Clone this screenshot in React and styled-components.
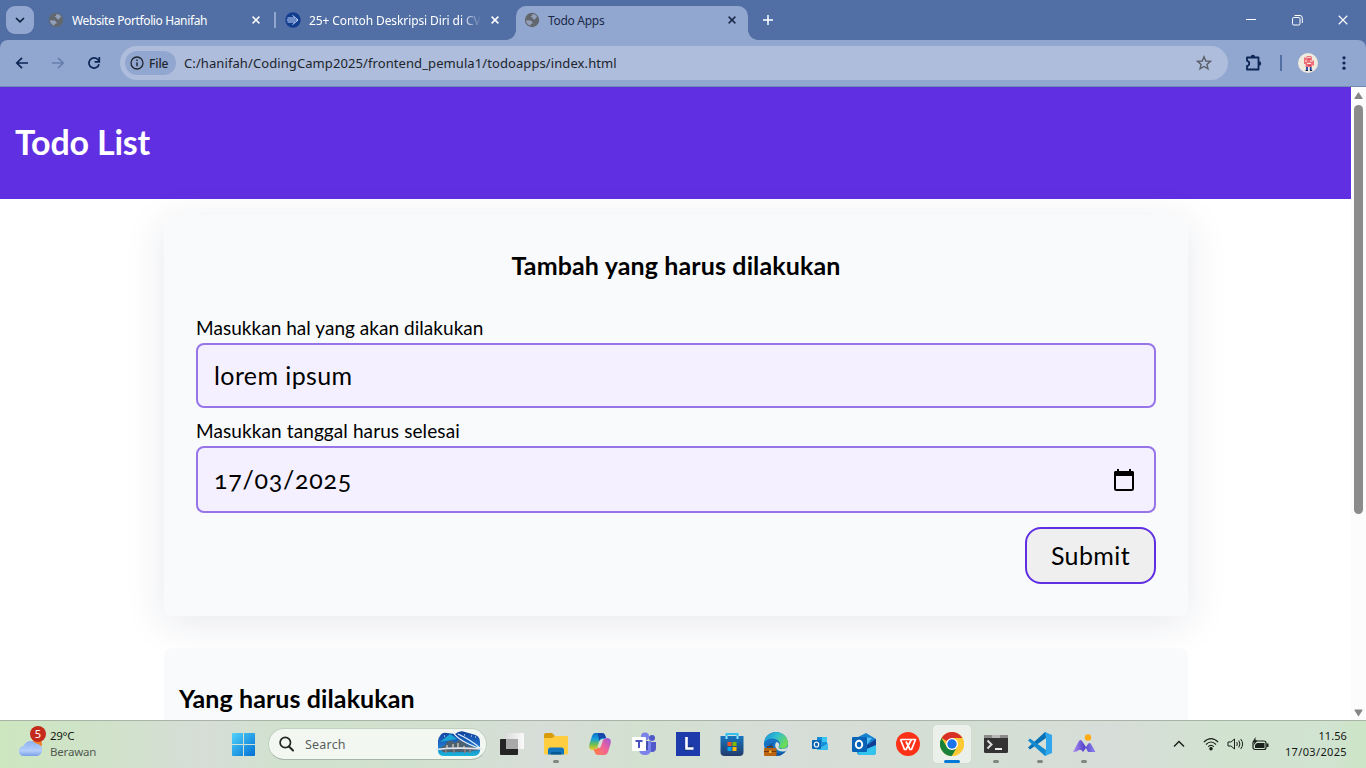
import React from "react";
import styled, { createGlobalStyle, css } from "styled-components";

const GlobalStyle = createGlobalStyle`
  * { box-sizing: border-box; }
  html, body { margin: 0; height: 100%; overflow: hidden; }
  svg { display: block; flex: none; }
`;

const uiFont = css`font-family: "Noto Sans", "Open Sans", sans-serif;`;
const pageFont = css`font-family: Lato, "Open Sans", sans-serif;`;

const Screen = styled.div`
  width: 1366px;
  height: 768px;
  display: flex;
  flex-direction: column;
  overflow: hidden;
  background: #fff;
  ${uiFont}
`;

/* ---------- browser chrome ---------- */
const TabStrip = styled.div`
  height: 40px;
  flex: none;
  display: flex;
  align-items: flex-start;
  background: #516fa5;
  padding: 6px 0 0 6px;
`;
const TabSearch = styled.button`
  width: 28px;
  height: 28px;
  border: 0;
  padding: 0;
  border-radius: 9px;
  background: #92a7d0;
  display: grid;
  place-items: center;
  margin-right: 6px;
`;
const Tab = styled.div`
  position: relative;
  width: ${(p) => p.$width}px;
  height: 34px;
  display: flex;
  align-items: center;
  padding: 0 ${(p) => p.$end}px 6px 8px;
  color: ${(p) => (p.$active ? "#1c2a4a" : "#fff")};
  ${(p) =>
    p.$active &&
    css`
      background: #92a7d0;
      border-radius: 10px 10px 0 0;
      &::before, &::after {
        content: "";
        position: absolute;
        bottom: 0;
        width: 10px;
        height: 10px;
      }
      &::before { left: -10px; background: radial-gradient(circle at 0 0, transparent 9.5px, #92a7d0 10.2px); }
      &::after { right: -10px; background: radial-gradient(circle at 100% 0, transparent 9.5px, #92a7d0 10.2px); }
    `}
`;
const TabTitle = styled.span`
  flex: 1;
  padding-top: 2px;
  margin-left: 8px;
  margin-right: 10px;
  font-size: 12px;
  line-height: 16px;
  letter-spacing: ${(p) => p.$track || 0}px;
  white-space: nowrap;
  ${(p) => p.$fade && css`mask-image: linear-gradient(90deg, #000 calc(100% - 20px), transparent calc(100% + 1px));`}
`;
const TabDivider = styled.i`
  width: 2px;
  height: 16px;
  margin: 6px 1px 0;
  background: #92a7d0;
`;
const NewTab = styled.span`
  display: grid;
  place-items: center;
  width: 28px;
  height: 28px;
  margin-left: 6px;
`;
const WindowButtons = styled.div`
  display: flex;
  margin-left: auto;
`;
const WindowButton = styled.span`
  width: 46px;
  height: 28px;
  display: grid;
  place-items: center;
`;
const ToolbarBack = styled.div`
  background: #516fa5;
  height: 47px;
  flex: none;
`;
const Toolbar = styled.div`
  height: 47px;
  display: flex;
  align-items: center;
  background: #92a7d0;
  border-radius: 8px 8px 0 0;
  border-bottom: 1px solid #728bb3;
  padding: 0 4px;
`;
const ToolButton = styled.span`
  width: ${(p) => p.$w || 36}px;
  flex: none;
  height: 34px;
  display: grid;
  place-items: center;
`;
const Omnibox = styled.div`
  width: 1108px;
  flex: none;
  height: 34px;
  margin-left: 8px;
  padding: 0 16px 0 5px;
  display: flex;
  align-items: center;
  border-radius: 17px;
  background: #aebddb;
`;
const FileChip = styled.span`
  width: 51px;
  height: 24px;
  padding-left: 5px;
  display: flex;
  align-items: center;
  gap: 5px;
  border-radius: 12px;
  background: #92a7d0;
  color: #20242c;
  font-size: 12px;
  font-weight: 500;
  letter-spacing: ${(p) => p.$track || 0}px;
`;
const Address = styled.span`
  flex: 1;
  margin-left: 8px;
  color: #20242c;
  font-size: 13px;
  line-height: 18px;
  letter-spacing: ${(p) => p.$track}px;
`;
const ToolDivider = styled.i`
  width: 2px;
  height: 16px;
  margin: 0 8px 0 0;
  flex: none;
  background: #516fa5;
`;

/* ---------- todo page ---------- */
const Viewport = styled.div`
  height: 633px;
  flex: none;
  display: flex;
`;
const Page = styled.div`
  width: 1351px;
  height: 633px;
  overflow: hidden;
  background: #fff;
  color: #000;
  ${pageFont}
`;
const PageHeader = styled.header`
  height: 112px;
  display: flex;
  align-items: center;
  padding: 0 15px 2px;
  background: #602fe1;
  color: #fff;
`;
const PageTitle = styled.h1`
  margin: 0;
  font-size: 34px;
  line-height: 40px;
  font-weight: 700;
  letter-spacing: -0.2px;
`;
const Main = styled.main`
  width: 1024px;
  margin: 16px 0 0 164px;
  display: flex;
  flex-direction: column;
  gap: 32px;
`;
const Card = styled.section`
  height: 401px;
  padding: ${(p) => (p.$list ? "31px 15px" : "31px 32px")};
  display: flex;
  flex-direction: column;
  border-radius: 8px;
  background: #f8fafc;
  ${(p) => !p.$list && css`box-shadow: 0 8px 40px rgba(30, 41, 80, 0.1);`}
`;
const CardTitle = styled.h2`
  margin: 0 0 32px;
  font-size: 25px;
  line-height: 38px;
  font-weight: 700;
  letter-spacing: ${(p) => p.$track}px;
  text-align: ${(p) => p.$align || "left"};
`;
const Label = styled.label`
  font-size: 19px;
  line-height: 24px;
  margin-bottom: 3px;
  letter-spacing: ${(p) => p.$track}px;
`;
const Field = styled.div`
  height: ${(p) => p.$height}px;
  flex: none;
  display: flex;
  align-items: center;
  justify-content: space-between;
  padding: 0 19px 0 16px;
  margin-bottom: ${(p) => p.$gap}px;
  border: 2px solid #9775e8;
  border-radius: 8px;
  background: #f5f0ff;
`;
const Value = styled.span`
  padding-bottom: 2px;
  font-size: 25px;
  line-height: 30px;
  letter-spacing: ${(p) => p.$track}px;
  font-variant-numeric: oldstyle-nums;
`;
const Submit = styled.button`
  align-self: flex-end;
  width: 131px;
  height: 57px;
  padding: 0 0 2px;
  border: 2px solid #602fe1;
  border-radius: 16px;
  background: #efefef;
  color: #000;
  font-size: 25px;
  letter-spacing: 0.4px;
  ${pageFont}
`;
const Scrollbar = styled.div`
  width: 15px;
  height: 633px;
  display: flex;
  flex-direction: column;
  align-items: center;
  padding: 5px 0 3px;
  background: #fcfcfc;
`;
const Thumb = styled.i`
  width: 9px;
  height: 409px;
  margin: 5px 0 auto;
  border-radius: 5px;
  background: #8b8b8b;
`;

/* ---------- taskbar ---------- */
const Taskbar = styled.footer`
  height: 48px;
  flex: none;
  display: flex;
  align-items: center;
  padding-bottom: 1px;
  border-top: 1px solid #a9b4a8;
  background: linear-gradient(90deg, #cde7c0 0, #d0e2c9 100px, #d6ded7 205px, #d0e2cd 290px, #d2e1d0 450px, #d7ddd8 540px, #d3e1d0 640px, #d7ddd8 780px, #d4dfd4 980px, #d7ddd9 1110px, #d1e3cf 1230px, #d1e3d1 1330px, #cce5c4 1366px);
`;
const Weather = styled.div`
  width: 221px;
  flex: none;
  padding: 0 0 1px 16px;
  display: flex;
  align-items: center;
  gap: 6px;
`;
const WeatherText = styled.div`
  font-size: 11.5px;
  line-height: 16px;
  color: ${(p) => (p.$soft ? "#515a51" : "#151915")};
  letter-spacing: ${(p) => p.$track}px;
`;
const WeatherIcon = styled.div`
  position: relative;
  width: 28px;
  height: 36px;
  padding: 12px 0 0 2px;
`;
const Badge = styled.span`
  position: absolute;
  top: 0;
  right: -2px;
  width: 16px;
  height: 16px;
  border-radius: 8px;
  background: #c42b1c;
  color: #fff;
  font-size: 11px;
  line-height: 16px;
  text-align: center;
`;
const Cell = styled.div`
  position: relative;
  width: 44px;
  flex: none;
  height: 46px;
  display: grid;
  place-items: center;
`;
const Mark = styled.i`
  position: absolute;
  left: ${(p) => (p.$active ? 14 : 19)}px;
  bottom: 4px;
  width: ${(p) => (p.$active ? 16 : 6)}px;
  height: 3px;
  border-radius: 2px;
  background: ${(p) => (p.$active ? "#0078d4" : "#7f877f")};
`;
const ActivePlate = styled.div`
  width: 38px;
  height: 38px;
  display: grid;
  place-items: center;
  border-radius: 4px;
  background: #ebf0eb;
  box-shadow: 0 0 1px #b9c2b9;
`;
const Search = styled.div`
  width: 219px;
  flex: none;
  height: 32px;
  margin: 0 3px 0 3px;
  padding: 0 4px 0 10px;
  display: flex;
  align-items: center;
  border: 1px solid #c3cfc2;
  border-bottom-color: #a9b5a9;
  border-radius: 16px;
  background: #f2f7f1;
  color: #5a5f5a;
  font-size: 12.5px;
`;
const SearchText = styled.span`
  flex: 1;
  margin-left: 11px;
  letter-spacing: 0.2px;
`;
const Tray = styled.div`
  flex: 1;
  display: flex;
  align-items: center;
  justify-content: flex-end;
  padding: 0 19px 1px 0;
`;
const TrayIcons = styled.div`
  display: flex;
  align-items: center;
  gap: 8px;
  margin: 0 16px 0 18px;
`;
const Clock = styled.div`
  width: 62px;
  display: flex;
  justify-content: flex-end;
  font-size: 11px;
  line-height: 16px;
  white-space: nowrap;
  color: #151915;
  letter-spacing: ${(p) => p.$track || 0}px;
`;

/* ---------- icons ---------- */
const Globe = () => (
  <svg width="16" height="16" viewBox="0 0 16 16">
    <circle cx="8" cy="8" r="7.2" fill="#62676d" />
    <path d="M8.500 2C10.500 2 12.500 3 13.300 5L12 5.500 11 7.500 9 7 8 5.300 6.500 4.500 8 3.800zM2 8.300L6.500 8.500 8.500 10 8.500 11.500 6.500 12 6.800 13.800C4 13 2 11 2 8.300z" fill={"#92a0b9"} />
  </svg>
);
const Cross = ({ color = "#fff", size = 8, w = 1.5 }) => (
  <svg width={size} height={size} viewBox="0 0 8 8">
    <path d="M.6.6l6.8 6.8M7.4.6L.6 7.4" stroke={color} strokeWidth={w} />
  </svg>
);
const SiteLogo = () => (
  <svg width="16" height="16" viewBox="0 0 16 16">
    <circle cx="8" cy="8" r="7.7" fill="#123d8f" />
    <path d="M2.500 6H10M1.800 8H13M2.500 10H10M7.500 3.300L13 8L7.500 12.700" stroke="#c8dcff" strokeWidth="1" fill="none" />
  </svg>
);
const Arrow = ({ color, flip }) => (
  <svg width="14" height="14" viewBox="0 0 14 14">
    <path d={flip ? "M1 7h11M7 1.800L12.200 7L7 12.200" : "M13 7H2M7 1.800L1.800 7L7 12.200"} stroke={color} strokeWidth="1.700" fill="none" />
  </svg>
);
const Reload = () => (
  <svg width="14" height="14" viewBox="0 0 14 14">
    <path d="M12 8.200A5.100 5.100 0 1 1 10.800 3.500L12 5" stroke="#0b2555" strokeWidth="1.700" fill="none" />
    <path d="M12.300 1v4.800H7.600" stroke="#0b2555" strokeWidth="1.700" fill="none" />
  </svg>
);
const Info = () => (
  <svg width="14" height="14" viewBox="0 0 14 14">
    <circle cx="7" cy="7" r="6" fill="none" stroke="#20242c" strokeWidth="1.300" />
    <path d="M7 6.200v4M7 3.500v1.500" stroke="#20242c" strokeWidth="1.400" />
  </svg>
);
const Star = () => (
  <svg width="16" height="16" viewBox="0 0 16 16">
    <path d="M8 1.800l1.800 4.200 4.600.4-3.500 3 1.100 4.500L8 11.500l-4 2.400 1.100-4.500-3.500-3 4.600-.4z" fill="none" stroke="#5a5f6a" strokeWidth="1.400" />
  </svg>
);
const Puzzle = () => (
  <svg width="18" height="18" viewBox="0 0 18 18">
    <path d="M2 3.500H13.500V15.500H2V12C5 11.500 5 7.300 2 6.800Z" fill="none" stroke="#0b2555" strokeWidth="1.800" strokeLinejoin="round" />
    <path d="M5.700 3a2.200 2.200 0 0 1 4.400 0zM14 7.300a2.200 2.200 0 0 1 0 4.400z" fill="#0b2555" />
  </svg>
);
const Avatar = () => (
  <svg width="20" height="20" viewBox="0 0 20 20">
    <circle cx="10" cy="10" r="10" fill="#eeeade" />
    <path d="M6 4.500H8L9 3H13L14 4.500V7.500H16V12.500H14V14H7.500V11H6z" fill="#ef7078" />
    <path d="M8.500 4.800h4.500M7 8h2M12 8h2.500M9 10.500h4" stroke="#fbe9e4" strokeWidth="1" />
    <path d="M9.500 6h3M10 12.300h3" stroke="#b72b45" strokeWidth=".8" />
    <path d="M9 14v3.500M12.700 14v3.500" stroke="#173fa5" strokeWidth="1.800" />
    <path d="M7.500 17.500h2.500M12 17.500h2.200" stroke="#172044" />
  </svg>
);
const Dots = () => (
  <svg width="4" height="14" viewBox="0 0 4 14" fill="#0b2555">
    <circle cx="2" cy="1.800" r="1.600" /><circle cx="2" cy="7" r="1.600" /><circle cx="2" cy="12.200" r="1.600" />
  </svg>
);
const ScrollArrow = ({ down }) => (
  <svg width="9" height="8" viewBox="0 0 9 8">
    <path d={down ? "M1 1h7L4.500 6.500z" : "M1 6.500h7L4.500 1z"} fill="#858585" stroke="#858585" strokeWidth="1.200" strokeLinejoin="round" />
  </svg>
);
const Calendar = () => (
  <svg width="22" height="24" viewBox="0 0 22 24">
    <path d="M4 1h2v3H4zM16 1h2v3h-2z" />
    <rect x="2" y="4" width="18" height="18" rx="1.500" fill="none" stroke="#000" strokeWidth="2" />
    <path d="M1 4.500Q1 3 2.500 3h17Q21 3 21 4.500V8H1z" />
  </svg>
);
const Cloud = () => (
  <svg width="26" height="19" viewBox="0 0 26 19">
    <defs><linearGradient id="cloud" x2="0" y2="1"><stop stopColor="#8fb3f2" /><stop offset=".65" stopColor="#b5cefa" /><stop offset="1" stopColor="#779fe8" /></linearGradient></defs>
    <circle cx="19" cy="6" r="5" fill="#ef7f27" />
    <path d="M6 18a5 5 0 0 1-.5-10A7.500 7.500 0 0 1 18 5.500 6.300 6.300 0 0 1 19 18z" fill="url(#cloud)" />
  </svg>
);
const StartIcon = () => (
  <svg width="24" height="24" viewBox="0 0 24 24">
    <defs><linearGradient id="win" x2="1" y2="1"><stop stopColor="#51d3fb" /><stop offset="1" stopColor="#006fd3" /></linearGradient></defs>
    <path fill="url(#win)" d="M2 1H12V12H1V2Q1 1 2 1ZM13 1H23Q24 1 24 2V12H13ZM1 13H12V24H2Q1 24 1 23ZM13 13H24V23Q24 24 23 24H13Z" />
  </svg>
);
const Magnifier = () => (
  <svg width="15" height="16" viewBox="0 0 15 16">
    <circle cx="6.300" cy="6.500" r="5.200" fill="none" stroke="#222722" strokeWidth="1.700" />
    <path d="M10 10.500l4 4" stroke="#222722" strokeWidth="2" strokeLinecap="round" />
  </svg>
);
const Bridge = () => (
  <svg width="46" height="26" viewBox="0 0 46 26">
    <defs><linearGradient id="sky" x2="0" y2="1"><stop stopColor="#10409a" /><stop offset=".55" stopColor="#1e70ca" /><stop offset="1" stopColor="#19b6d9" /></linearGradient></defs>
    <path d="M4 5Q6 1 11 2L19 3Q24-1 29 1L36 3Q44 4 44 11V20Q43 25 37 25H8Q2 25 2 19V10Q2 7 4 5z" fill="url(#sky)" />
    <path d="M4 17l5-3 3-4h5l2 2 4-3 5 1 3 4 8 2 4 3-13 2H7z" fill="#4d6170" />
    <path d="M10 18v-4h2v4M16 18v-5h2v5M21 18v-6h2v6M27 18v-3h2v3" fill="#a7a6a0" />
    <path d="M4 11L14 3L21 8z" fill="#1ba7d5" />
    <path d="M17 1Q22 10 45 18M22 3Q35 9 44 17" stroke="#e7f2fd" strokeWidth="1.200" fill="none" />
    <path d="M0 18.500Q20 16 46 18" stroke="#dfe4ef" strokeWidth="1.600" fill="none" />
    <path d="M10 18v4M18 18v4M29 18v4M34 18v4" stroke="#8e8180" strokeWidth="1.500" />
    <path d="M39 6h1M28 4h1M35 5h1M8 5h1" stroke="#fff" />
  </svg>
);
const TaskView = () => (
  <svg width="24" height="24" viewBox="0 0 24 24">
    <defs><linearGradient id="tv" x2="1"><stop stopColor="#dcdcdc" /><stop offset="1" stopColor="#fafafa" /></linearGradient></defs>
    <rect x="0" y="7" width="18" height="16" rx="1" fill="#242424" />
    <rect x="6" y="1" width="18" height="16" rx="1" fill="url(#tv)" />
    <path d="M6 7h12v10H6z" fill="#a9a9a9" />
  </svg>
);
const Folder = () => (
  <svg width="24" height="24" viewBox="0 0 24 24">
    <path d="M0 3Q0 1 2 1H8L11 4H22V9H0z" fill="#d99a0b" />
    <path d="M0 6H8L11 4H23Q24 4 24 5V21Q24 22.500 22.500 22.500H1.500Q0 22.500 0 21z" fill="#ffcd40" />
    <path d="M4 22.500V18Q4 15.500 6.500 15.500H17.500Q20 15.500 20 18V22.500z" fill="#1475bd" />
    <path d="M7 20h10v2.500H7z" fill="#075897" />
  </svg>
);
const Copilot = () => (
  <svg width="24" height="24" viewBox="0 0 24 24">
    <defs>
      <linearGradient id="cp1" x2="0" y2="1"><stop stopColor="#0870c5" /><stop offset=".35" stopColor="#19a0df" /><stop offset=".65" stopColor="#65bd57" /><stop offset="1" stopColor="#f4cb20" /></linearGradient>
      <linearGradient id="cp2" x1="1" x2="0" y2="1"><stop stopColor="#9956de" /><stop offset=".5" stopColor="#f36495" /><stop offset="1" stopColor="#ff8553" /></linearGradient>
    </defs>
    <path d="M7 1H14Q17 1 17.500 5L18 7H15Q12 7 11 10L9 16Q8 18 5 18Q0 18 1.500 12L4 4Q5 1 7 1z" fill="url(#cp1)" />
    <path d="M17 23H10Q7 23 6.500 19L6 17H9Q12 17 13 14L15 8Q16 6 19 6Q24 6 22.500 12L20 20Q19 23 17 23z" fill="url(#cp2)" />
    <path d="M10 1H14Q17 1 18 6H15Q12 6 11 9z" fill="#1747a8" />
    <path d="M5.500 18Q9 18 10 15L12 17Q11 22 8 21z" fill="#ff7650" />
  </svg>
);
const Teams = () => (
  <svg width="26" height="24" viewBox="0 0 26 24">
    <circle cx="21" cy="6" r="3" fill="#5059c9" /><path d="M17 10h8v6q0 4-4 4-3 0-4-3z" fill="#5059c9" />
    <circle cx="14" cy="4.500" r="4" fill="#7b83eb" /><path d="M8 9h12v8q0 6-6 6t-6-6z" fill="#7b83eb" />
    <path d="M8 9h9v9H9z" fill="#4650ae" /><rect x="1" y="5" width="14" height="14" rx="1" fill="#fff" />
    <path d="M4.500 9h7M8 9v7" stroke="#4a50bd" strokeWidth="2" />
  </svg>
);
const LApp = () => (
  <svg width="24" height="24" viewBox="0 0 24 24">
    <path d="M0 0h24v24H0z" fill="#1d3baa" /><path d="M8 15l8-2v5l-7 1z" fill="#123573" /><path d="M10.500 5v11.500H17.500" fill="none" stroke="#fff" strokeWidth="2.600" />
  </svg>
);
const Store = () => (
  <svg width="24" height="24" viewBox="0 0 24 24">
    <defs><linearGradient id="store" x2="0" y2="1"><stop stopColor="#1676bf" /><stop offset="1" stopColor="#223b6b" /></linearGradient></defs>
    <path d="M6.500 7V2H17.500V7" fill="none" stroke="#35c1ef" strokeWidth="2" />
    <path d="M.5 4H23.500V20Q23.500 24 19.500 24H4.500Q.5 24 .5 20z" fill="url(#store)" />
    <path d="M7.500 10h4v4h-4z" fill="#f25022" /><path d="M12.500 10h4v4h-4z" fill="#7fba00" /><path d="M7.500 15h4v4h-4z" fill="#00a4ef" /><path d="M12.500 15h4v4h-4z" fill="#ffb900" />
    <path d="M6.500 4v3M17.500 4v3" stroke="#8be4ff" strokeWidth="2" />
  </svg>
);
const Edge = () => (
  <svg width="24" height="24" viewBox="0 0 24 24">
    <defs>
      <linearGradient id="edge" x2="1" y2=".5"><stop stopColor="#178bd1" /><stop offset=".5" stopColor="#30bdd3" /><stop offset="1" stopColor="#6bdc54" /></linearGradient>
      <clipPath id="edgeDisc"><circle cx="12" cy="12" r="12" /></clipPath>
    </defs>
    <g clipPath="url(#edgeDisc)">
      <path d="M0 0H24V24H0z" fill="#1673c5" />
      <path d="M0 11Q3 6 9 6.500Q16 7.500 16 12.500Q14 14 15 15.500Q17 17 20 16.500Q24 15 24 11V0H0z" fill="url(#edge)" />
      <path d="M10 11Q6 15 10 19Q15 23 22 19L20 24H8L4 17Q4 11 10 11z" fill="#0f549f" />
      <path d="M12.500 10Q16 11 15 13.500Q13.500 16 17 17Q21 17.500 24 14.500V18.500Q17 21 13 17.500Q9.500 13.500 12.500 10z" fill="#d7e0d9" />
    </g>
    <rect x="0" y="16" width="12.500" height="8" rx="1" fill="#ba6411" /><path d="M3.500 16v-1.500h5V16M0 19.500h12.500" stroke="#713507" fill="none" /><path d="M5 18.500h2.500v2.500H5z" fill="#f3b33b" />
  </svg>
);
const OutlookOld = () => (
  <svg width="16" height="16" viewBox="0 0 16 16">
    <path d="M5 1h10v13H5z" fill="#168ed7" /><path d="M10 1h5v5h-5z" fill="#37c6f3" /><path d="M5 8l5 3 6-4v7H5z" fill="#39bceb" />
    <rect y="4" width="9" height="9" rx="1" fill="#0864b4" /><ellipse cx="4.500" cy="8.500" rx="2.200" ry="2.500" fill="none" stroke="#fff" strokeWidth="1.200" />
  </svg>
);
const Outlook = () => (
  <svg width="24" height="24" viewBox="0 0 24 24">
    <path d="M4 6L14 1L24 7V20Q24 23 21 23H8Q5 23 5 20z" fill="#1680d1" /><path d="M12 5l8 1-7 9-8-6z" fill="#52bdf2" /><path d="M14 14L24 7v8l-9 7z" fill="#113d93" />
    <path d="M5 21L24 13V20Q24 23 21 23H8z" fill="#32c4ee" /><rect x="0" y="5" width="15" height="15" rx="1" fill="#0862b8" />
    <ellipse cx="7" cy="12.500" rx="3.200" ry="3.700" fill="none" stroke="#fff" strokeWidth="2" />
  </svg>
);
const Wps = () => (
  <svg width="24" height="24" viewBox="0 0 24 24">
    <circle cx="12" cy="12" r="12" fill="#fb3217" /><path d="M4.500 7.500H19.500L15.500 17.500H14L10 9.500M4.500 7.500L8.500 17.500H10L15.500 7.500" fill="none" stroke="#fff" strokeWidth="1.700" strokeLinejoin="round" />
  </svg>
);
const Chrome = () => (
  <svg width="24" height="24" viewBox="0 0 24 24">
    <circle cx="12" cy="12" r="12" fill="#fcc934" /><path d="M12 12L1.600 6A12 12 0 0 1 22.400 6H12z" fill="#d93025" />
    <path d="M12 24A12 12 0 0 1 1.600 6L6.800 15 12 18l5.200-3z" fill="#188038" /><path d="M22.400 6H12L17.200 15 12 24A12 12 0 0 0 22.400 6z" fill="#fcc934" />
    <circle cx="12" cy="12" r="6" fill="#fff" /><circle cx="12" cy="12" r="4.700" fill="#1a73e8" />
  </svg>
);
const Terminal = () => (
  <svg width="24" height="20" viewBox="0 0 24 20">
    <rect y="1" width="24" height="18" rx="1.500" fill="#333" /><path d="M0 4V2Q0 1 1 1H23Q24 1 24 2V4z" fill="#8b8b8b" /><path d="M8 1h8v3H8z" fill="#b7b7b7" />
    <path d="M3.500 6.500L7.500 10.500L3.500 14.500" stroke="#ddd" strokeWidth="2" fill="none" /><path d="M11 15h7" stroke="#eee" strokeWidth="2" />
  </svg>
);
const VsCode = () => (
  <svg width="24" height="24" viewBox="0 0 24 24">
    <path d="M0 15.500L2 17.500L18 6V0H17z" fill="#0870b5" /><path d="M0 8.500L2 6.500L18 18V24H17z" fill="#1389cf" /><path d="M17 0L24 3V21L17 24L18 18V6z" fill="#2fa6ed" />
  </svg>
);
const Peaks = () => (
  <svg width="24" height="20" viewBox="0 0 24 20">
    <defs><linearGradient id="peak" x2="1"><stop stopColor="#b18bf3" /><stop offset=".5" stopColor="#5546ca" /><stop offset="1" stopColor="#9182ee" /></linearGradient></defs>
    <circle cx="16" cy="3.500" r="3.200" fill="#ffac14" /><path d="M1 18L7 7Q8.500 5 10 7L14 13L16 10Q17.500 8 19 10L23.500 18H16L14 14L11 18Q9 15 7 16Q5 18 1 18z" fill="url(#peak)" />
  </svg>
);
const ChevronUp = () => (
  <svg width="12" height="8" viewBox="0 0 12 8"><path d="M1 6.500L6 1.500L11 6.500" fill="none" stroke="#161b16" strokeWidth="1.400" /></svg>
);
const Wifi = () => (
  <svg width="16" height="14" viewBox="0 0 16 14" fill="none" stroke="#1a201a" strokeWidth="1.100">
    <path d="M.8 5.200Q8-2 15.200 5.200M3 7.500Q8 2.500 13 7.500M5.200 9.700Q8 7 10.800 9.700" /><circle cx="8" cy="11.700" r="1.200" fill="#1a201a" />
  </svg>
);
const Volume = () => (
  <svg width="17" height="14" viewBox="0 0 17 14" fill="none" stroke="#1a201a" strokeWidth="1">
    <path d="M1 5H4L7.500 2V12L4 9H1zM9.700 5Q11 7 9.700 9M11.800 3.500Q14 7 11.800 10.500M13.700 2Q17.500 7 13.700 12" />
  </svg>
);
const Battery = () => (
  <svg width="17" height="14" viewBox="0 0 17 14">
    <rect x="1" y="4" width="13" height="8.500" rx="2" fill="none" stroke="#1a201a" strokeWidth="1.200" /><path d="M5 6h7.500v5H3V8zM14.500 6.500H16.500V10H14.500z" fill="#1a201a" />
    <path d="M3.500 0L.5 5H2.500L1.500 8.500L5.500 3.500H3.500z" fill="#1a201a" />
  </svg>
);

const taskbarApps = [
  { id: "task-view", Icon: TaskView },
  { id: "explorer", Icon: Folder, running: true },
  { id: "copilot", Icon: Copilot },
  { id: "teams", Icon: Teams },
  { id: "l-app", Icon: LApp },
  { id: "store", Icon: Store },
  { id: "edge", Icon: Edge },
  { id: "outlook-classic", Icon: OutlookOld },
  { id: "outlook", Icon: Outlook },
  { id: "wps", Icon: Wps },
  { id: "chrome", Icon: Chrome, active: true },
  { id: "terminal", Icon: Terminal, running: true },
  { id: "vscode", Icon: VsCode, running: true },
  { id: "peaks", Icon: Peaks, running: true },
];

export default function App() {
  return (
    <Screen>
      <GlobalStyle />
      <TabStrip>
        <TabSearch><svg width="10" height="6" viewBox="0 0 10 6"><path d="M1 1l4 3.800L9 1" fill="none" stroke="#0b2040" strokeWidth="1.700" /></svg></TabSearch>
        <Tab $width={233} $end={13}><Globe /><TabTitle $track={-0.37}>Website Portfolio Hanifah</TabTitle><Cross /></Tab>
        <TabDivider />
        <Tab $width={239} $end={19}><SiteLogo /><TabTitle $fade $track={-0.1}>25+ Contoh Deskripsi Diri di CV</TabTitle><Cross /></Tab>
        <Tab $width={232} $end={12} $active><Globe /><TabTitle $track={-0.3}>Todo Apps</TabTitle><Cross color="#1c2a4a" /></Tab>
        <NewTab><svg width="10" height="10" viewBox="0 0 10 10"><path d="M5 0v10M0 5h10" stroke="#fff" strokeWidth="1.500" /></svg></NewTab>
        <WindowButtons>
          <WindowButton><svg width="10" height="10"><path d="M0 4.500h10" stroke="#fff" /></svg></WindowButton>
          <WindowButton><svg width="11" height="11" fill="none" stroke="#fff"><rect x=".5" y="2.500" width="7.500" height="7.500" rx="1.200" /><path d="M2.500.5H8Q10.300.5 10.300 3V8" /></svg></WindowButton>
          <WindowButton><Cross size={10} w={0.9} /></WindowButton>
        </WindowButtons>
      </TabStrip>
      <ToolbarBack>
        <Toolbar>
          <ToolButton><Arrow color="#0b2555" /></ToolButton>
          <ToolButton><Arrow flip color="#6780ae" /></ToolButton>
          <ToolButton><Reload /></ToolButton>
          <Omnibox>
            <FileChip $track={-0.1}><Info />File</FileChip>
            <Address $track={0.09}>C:/hanifah/CodingCamp2025/frontend_pemula1/todoapps/index.html</Address>
            <Star />
          </Omnibox>
          <ToolButton $w={52}><Puzzle /></ToolButton>
          <ToolDivider />
          <ToolButton><Avatar /></ToolButton>
          <ToolButton><Dots /></ToolButton>
        </Toolbar>
      </ToolbarBack>

      <Viewport>
        <Page>
          <PageHeader><PageTitle>Todo List</PageTitle></PageHeader>
          <Main>
            <Card>
              <CardTitle $align="center" $track={0.13}>Tambah yang harus dilakukan</CardTitle>
              <Label $track={0.04}>Masukkan hal yang akan dilakukan</Label>
              <Field $height={65} $gap={11}><Value $track={0.4}>lorem ipsum</Value></Field>
              <Label $track={0.1}>Masukkan tanggal harus selesai</Label>
              <Field $height={67} $gap={14}><Value $track={0.75}>17/03/2025</Value><Calendar /></Field>
              <Submit type="button">Submit</Submit>
            </Card>
            <Card $list><CardTitle $track={0.1}>Yang harus dilakukan</CardTitle></Card>
          </Main>
        </Page>
        <Scrollbar><ScrollArrow /><Thumb /><ScrollArrow down /></Scrollbar>
      </Viewport>

      <Taskbar>
        <Weather>
          <WeatherIcon><Badge>5</Badge><Cloud /></WeatherIcon>
          <div><WeatherText $track={-0.3}>29°C</WeatherText><WeatherText $soft $track={-0.2}>Berawan</WeatherText></div>
        </Weather>
        <Cell><StartIcon /></Cell>
        <Search><Magnifier /><SearchText>Search</SearchText><Bridge /></Search>
        {taskbarApps.map(({ id, Icon, running, active }) => (
          <Cell key={id}>
            {active ? <ActivePlate><Icon /></ActivePlate> : <Icon />}
            {(running || active) && <Mark $active={active} />}
          </Cell>
        ))}
        <Tray>
          <ChevronUp />
          <TrayIcons><Wifi /><Volume /><Battery /></TrayIcons>
          <div><Clock $track={0.1}>11.56</Clock><Clock $track={0.35}>17/03/2025</Clock></div>
        </Tray>
      </Taskbar>
    </Screen>
  );
}
